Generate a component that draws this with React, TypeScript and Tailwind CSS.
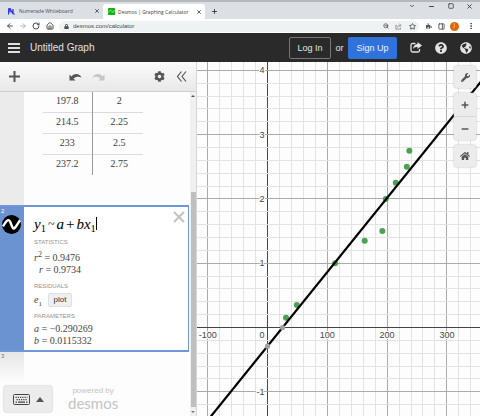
import type { ReactNode } from "react";
import {
  FaCog,
  FaGlobeAmericas,
  FaHome,
  FaMinus,
  FaPlus,
  FaPuzzlePiece,
  FaQuestionCircle,
  FaWrench,
  FaLock,
} from "react-icons/fa";
import {
  ArrowLeft,
  ArrowRight,
  ChevronDown,
  EllipsisVertical,
  House,
  Minus,
  PanelRight,
  Plus,
  RotateCw,
  Square,
  Star,
  X,
  ZoomOut,
} from "lucide-react";

const sans = "font-['Liberation_Sans',Arial,sans-serif]";
const serif = "font-['Liberation_Serif','Times_New_Roman',serif]";
const chrome = "font-['Open_Sans','Noto_Sans',sans-serif]";

function IconButton({ label, className = "", children }: { label: string; className?: string; children: ReactNode }) {
  return (
    <button type="button" aria-label={label} className={`flex shrink-0 items-center justify-center ${className}`}>
      {children}
    </button>
  );
}

function ShareIcon({ className = "" }: { className?: string }) {
  return (
    <svg viewBox="0 0 24 22" className={className} aria-hidden="true">
      <path d="M11 3H5Q2 3 2 6v11q0 3 3 3h11q3 0 3-3v-3" fill="none" stroke="currentColor" strokeWidth="2.6" />
      <path d="M15 0l9 7-9 7v-4q-6-1-9 4 1-9 9-10z" fill="currentColor" />
    </svg>
  );
}

function TabStrip() {
  return (
    <div className="flex h-[19px] items-end border-t-2 border-[#b5b8bd] bg-[#dce0e4]">
      <div className="flex h-4 w-[103px] shrink-0 items-center pr-[3px] pl-2">
        <svg viewBox="0 0 14 14" className="size-[7px] shrink-0" aria-hidden="true">
          <path d="M1 13V2l3-1v8M4 1l6 11V2" fill="none" stroke="#2b36d9" strokeWidth="2.6" />
          <circle cx="12" cy="12" r="1.6" fill="#2b36d9" />
        </svg>
        <button type="button" className="ml-1 flex-1 text-left text-[5px] leading-[8px] whitespace-nowrap text-[#4a4d52]">
          Numerade Whiteboard
        </button>
        <IconButton label="Close Numerade Whiteboard" className="size-[7px] text-[#333]">
          <X size={6} strokeWidth={3} />
        </IconButton>
      </div>
      <div className="flex h-[15px] w-[102px] shrink-0 items-center rounded-t-[3px] bg-white pr-[3px] pl-[5px]">
        <svg viewBox="0 0 14 14" className="size-[7px] shrink-0" aria-hidden="true">
          <rect width="14" height="14" rx="1" fill="#12b312" />
          <path d="M1 9c3-6 5-5 7-2s3 2 5-3" fill="none" stroke="#b8efb8" strokeWidth="1.6" />
        </svg>
        <button type="button" className="ml-[3px] flex-1 text-left text-[5px] leading-[8px] whitespace-nowrap text-[#3c4043]">
          Desmos | Graphing Calculator
        </button>
        <IconButton label="Close Desmos" className="size-[7px] text-[#333]">
          <X size={6} strokeWidth={3} />
        </IconButton>
      </div>
      <IconButton label="New tab" className="ml-[5px] h-4 w-2 text-[#333]">
        <Plus size={7} strokeWidth={3} />
      </IconButton>
      <div className="ml-auto flex self-start pr-[1px] text-[#333]">
        <IconButton label="Search tabs" className="h-2 w-[19px]"><ChevronDown size={6} strokeWidth={3} /></IconButton>
        <IconButton label="Minimize" className="h-2 w-5"><Minus size={7} strokeWidth={3} /></IconButton>
        <IconButton label="Maximize" className="h-2 w-[19px]"><Square size={6} strokeWidth={3} /></IconButton>
        <IconButton label="Close window" className="h-2 w-[19px]"><X size={7} strokeWidth={3} /></IconButton>
      </div>
    </div>
  );
}

function AddressBar() {
  return (
    <div className="flex h-[14px] items-center bg-white pr-1 pl-[3px] text-[#4a4d51]">
      <IconButton label="Back" className="w-[13px]"><ArrowLeft size={8} strokeWidth={3} /></IconButton>
      <IconButton label="Forward" className="w-[13px] text-[#b4b6b9]"><ArrowRight size={8} strokeWidth={3} /></IconButton>
      <IconButton label="Reload" className="w-[14px]"><RotateCw size={8} strokeWidth={3} /></IconButton>
      <IconButton label="Home" className="w-[13px]"><House size={8} strokeWidth={3} /></IconButton>
      <div className="ml-[3px] flex h-[11px] flex-1 items-center rounded-full bg-[#eff2f3] pl-[5px]">
        <FaLock size={5} />
        <input
          type="text"
          aria-label="Address"
          defaultValue="desmos.com/calculator"
          className={`ml-1 min-w-0 flex-1 bg-transparent text-[6px] leading-[8px] text-[#45484c] outline-none ${sans}`}
        />
        <IconButton label="Zoom" className="w-[13px]"><ZoomOut size={6} strokeWidth={3} /></IconButton>
        <IconButton label="Share page" className="w-[13px] text-[#777]">
          <svg viewBox="0 0 24 24" className="size-[7px]" fill="none" stroke="currentColor" strokeWidth="2.5" aria-hidden="true">
            <path d="M7 8H3v13h16v-5M8 16c1-6 5-8 9-8M15 3l6 5-6 5" />
          </svg>
        </IconButton>
        <IconButton label="Bookmark" className="w-[14px]"><Star size={7} strokeWidth={3} /></IconButton>
      </div>
      <IconButton label="Extensions" className="ml-[3px] w-[13px]"><FaPuzzlePiece size={6} /></IconButton>
      <IconButton label="Side panel" className="w-[13px]"><PanelRight size={7} strokeWidth={3} /></IconButton>
      <IconButton label="Profile" className="mx-[2px] size-[9px] rounded-full bg-[#e0640c] text-[5px] text-white">J</IconButton>
      <IconButton label="Menu" className="ml-1 w-[11px]"><EllipsisVertical size={8} strokeWidth={3} /></IconButton>
    </div>
  );
}

function Header() {
  return (
    <header className={`flex h-[29px] items-center bg-[#2a2a2a] pr-2 pl-2 text-[#e4e4e4] ${sans}`}>
      <IconButton label="Open graphs" className="w-3 flex-col gap-[2px]">
        <span className="h-[2px] w-3 bg-[#e0e0e0]" />
        <span className="h-[2px] w-3 bg-[#e0e0e0]" />
        <span className="h-[2px] w-3 bg-[#e0e0e0]" />
      </IconButton>
      <h1 className="ml-[10px] text-[10px] leading-[12px]">Untitled Graph</h1>
      <button type="button" className="ml-auto h-[22px] w-[42px] rounded-[2px] border border-[#777] text-[9px] leading-[12px]">
        Log In
      </button>
      <span className="w-[17px] text-center text-[9px] leading-[12px]">or</span>
      <button type="button" className="h-[22px] w-[49px] rounded-[2px] bg-[#2f72dc] text-[9px] leading-[12px] text-[#eaf2ff]">
        Sign Up
      </button>
      <IconButton label="Share graph" className="ml-[13px] w-3"><ShareIcon className="h-[11px] w-3" /></IconButton>
      <IconButton label="Help" className="ml-[13px] w-3"><FaQuestionCircle size={12} /></IconButton>
      <IconButton label="Language" className="ml-[13px] w-3"><FaGlobeAmericas size={12} /></IconButton>
    </header>
  );
}

function BentArrow() {
  return (
    <svg viewBox="0 0 26 16" className="h-2 w-[13px]" aria-hidden="true">
      <path d="M1 3v12h12l-4-4c5-4 10-5 16-2C22 2 12-1 5 7z" fill="currentColor" />
    </svg>
  );
}

function PanelToolbar() {
  return (
    <div className="flex h-[30px] shrink-0 items-center border-b border-[#d0d0d0] bg-linear-to-b from-[#fbfbfb] to-[#e8e8e8] pl-2 text-[#555]">
      <IconButton label="Add item" className="w-3">
        <svg viewBox="0 0 22 22" className="size-[11px]" stroke="currentColor" strokeWidth="4" aria-hidden="true">
          <path d="M11 0v22M0 11h22" />
        </svg>
      </IconButton>
      <IconButton label="Undo" className="ml-12 w-[14px]"><BentArrow /></IconButton>
      <IconButton label="Redo" className="ml-[10px] w-[14px] -scale-x-100 text-[#c6c6c6]"><BentArrow /></IconButton>
      <IconButton label="Edit list" className="ml-auto w-3"><FaCog size={11} /></IconButton>
      <IconButton label="Hide list" className="mr-[9px] ml-[10px] w-3">
        <svg viewBox="0 0 22 22" className="size-[11px]" fill="none" stroke="currentColor" strokeWidth="2.4" aria-hidden="true">
          <path d="M11 1L3 11l8 10M20 1l-8 10 8 10" />
        </svg>
      </IconButton>
    </div>
  );
}

const rows = [
  ["197.8", "2"],
  ["214.5", "2.25"],
  ["233", "2.5"],
  ["237.2", "2.75"],
];

function DataTable() {
  return (
    <div className="flex h-[113px]">
      <div className="w-6 shrink-0 bg-[#ebebeb]" />
      <div className="flex-1 pl-[19px]">
        <table aria-label="Data points" className={`w-[100px] table-fixed border-collapse text-center text-[10px] leading-[12px] text-[#3c3c3c] ${serif}`}>
          <tbody>
            {rows.map(([x, y], i) => (
              <tr key={x} className={i === 0 ? "h-5 border-b border-[#dcdcdc]" : i < rows.length - 1 ? "h-[21px] border-b border-[#dcdcdc]" : "h-[21px]"}>
                <td className="w-[49px] border-r border-[#999] pb-[2px]">{x}</td>
                <td className="pb-[2px] pl-[3px]">{y}</td>
              </tr>
            ))}
          </tbody>
        </table>
      </div>
    </div>
  );
}

function SectionLabel({ children }: { children: ReactNode }) {
  return <h2 className={`text-[6px] leading-[8px] text-[#929292] ${sans}`}>{children}</h2>;
}

function Sub({ children }: { children: ReactNode }) {
  return <sub className="bottom-[-3px] text-[0.7em] not-italic">{children}</sub>;
}

function Regression() {
  return (
    <div className="mr-px flex h-[147px] border-y-2 border-r border-[#6f96d8] bg-white">
      <div className="w-6 shrink-0 bg-[#6b93d2]">
        <div className={`pl-[1px] text-[6px] leading-[8px] text-white ${sans}`}>2</div>
        <button type="button" aria-label="Hide regression" className="ml-[2px] block">
          <svg viewBox="0 0 40 40" className="size-[19px]" aria-hidden="true">
            <circle cx="20" cy="20" r="20" fill="#000" />
            <path d="M2 24C8 14 13 6 17 14s5 18 10 13 7-11 11-16" fill="none" stroke="#fff" strokeWidth="5" />
          </svg>
        </button>
      </div>
      <div className={`flex-1 pl-[10px] text-[10px] leading-[12px] text-[#444] ${serif}`}>
        <div className="flex items-start justify-between pt-1 pr-[3px]">
          <div role="textbox" aria-label="Expression 2" tabIndex={0} className="flex h-[25px] items-center text-[15px] leading-[20px] text-black italic outline-none">
            <span>y<Sub>1</Sub></span>
            <span className="mx-[2px] text-[12px] not-italic">~</span>
            <span>a</span>
            <span className="mx-[2px] not-italic">+</span>
            <span>bx<Sub>1</Sub></span>
            <span className="h-[13px] w-px bg-black" />
          </div>
          <IconButton label="Delete expression" className="w-3 text-[#c2c2c2]">
            <svg viewBox="0 0 12 12" className="size-3" stroke="currentColor" strokeWidth="2" aria-hidden="true">
              <path d="M1 1l10 10M11 1L1 11" />
            </svg>
          </IconButton>
        </div>
        <div className="mt-[2px]"><SectionLabel>STATISTICS</SectionLabel></div>
        <div className="mt-[6px] h-3"><i>r</i><sup className="text-[8px]">2</sup> = 0.9476</div>
        <div className="h-3 pl-[5px]"><i>r</i> = 0.9734</div>
        <div className="mt-[6px]"><SectionLabel>RESIDUALS</SectionLabel></div>
        <div className="flex h-5 items-center gap-[6px]">
          <span><i>e</i><Sub>1</Sub></span>
          <button type="button" className={`h-[14px] w-6 rounded-[2px] border border-[#e0e0e0] bg-[#f0f0f0] text-[8px] leading-[10px] text-[#333] ${sans}`}>
            plot
          </button>
        </div>
        <div className="mt-[2px]"><SectionLabel>PARAMETERS</SectionLabel></div>
        <div className="mt-[3px]"><i>a</i> = −0.290269</div>
        <div><i>b</i> = 0.0115332</div>
      </div>
    </div>
  );
}

function KeyboardIcon() {
  return (
    <svg viewBox="0 0 34 22" className="h-[11px] w-[17px]" fill="none" stroke="#444" aria-hidden="true">
      <rect x="1" y="1" width="32" height="20" rx="2" strokeWidth="2" />
      <path d="M5 6.500h24M7 11h22" strokeWidth="2.500" strokeDasharray="2.500 2" />
      <path d="M5 16h3M10 16h14M26 16h3" strokeWidth="2.500" />
    </svg>
  );
}

function ExpressionPanel() {
  return (
    <aside className="flex w-[197px] shrink-0 flex-col border-r border-[#d6d6d6] bg-[#fdfdfd]">
      <PanelToolbar />
      <div className="flex flex-1">
        <div className="flex min-w-0 flex-1 flex-col">
          <DataTable />
          <Regression />
          <div className={`h-[30px] w-6 bg-linear-to-b from-[#e6e6e6] to-[#fdfdfd] pl-[1px] text-[6px] leading-[8px] text-[#777] ${sans}`}>3</div>
          <div className="mt-auto flex items-center gap-4 pb-1 pl-1">
            <button type="button" aria-label="Open keypad" className="flex h-[26px] w-12 items-center justify-center gap-[6px] rounded-[3px] bg-[#ececec] shadow-[0_0_2px_#aaa]">
              <KeyboardIcon />
              <svg viewBox="0 0 8 5" className="h-[5px] w-2" aria-hidden="true"><path d="M0 5l4-5 4 5z" fill="#555" /></svg>
            </button>
            <div className="text-center text-[#c4c4c4]">
              <div className={`text-[8px] leading-[9px] ${sans}`}>powered by</div>
              <div className="font-['Lato','Open_Sans',sans-serif] text-[15px] leading-[17px]">desmos</div>
            </div>
          </div>
        </div>
        <div className="flex w-[6px] shrink-0 flex-col items-center bg-[#f0f0f0] py-[3px]" aria-hidden="true">
          <svg viewBox="0 0 4 2" className="h-[2px] w-1"><path d="M0 2l2-2 2 2z" fill="#555" /></svg>
          <div className="mt-[95px] w-[5px] flex-1 bg-[#bfbfbf]" />
          <svg viewBox="0 0 4 2" className="mt-1 h-[2px] w-1"><path d="M0 0l2 2 2-2z" fill="#777" /></svg>
        </div>
      </div>
    </aside>
  );
}

// Plot coordinates: origin and pixels per unit on each axis.
const X0 = 70.5;
const Y0 = 265.5;
const DX = 0.598;
const DY = 64.3;
const px = (x: number) => X0 + x * DX;
const py = (y: number) => Y0 - y * DY;

const points = [
  [31, 0.15], [49, 0.35], [113, 1], [162.5, 1.35], [192, 1.5],
  [197.8, 2], [214.5, 2.25], [233, 2.5], [237.2, 2.75],
];
const gridX = Array.from({ length: 120 }, (_, i) => (i - 6) * 20);
const gridY = Array.from({ length: 80 }, (_, i) => (i - 50) / 5);

function Graph() {
  return (
    <svg role="img" aria-label="Scatter plot with a line of best fit" className={`absolute inset-0 size-full ${sans}`}>
      {gridX.map((x) => (
        <line key={x} x1={Math.floor(px(x)) + 0.5} x2={Math.floor(px(x)) + 0.5} y1="0" y2="100%" stroke={x === 0 ? "#444" : x % 100 === 0 ? "#aaa" : "#e3e3e3"} />
      ))}
      {gridY.map((y) => (
        <line key={y} x1="0" x2="100%" y1={Math.floor(py(y)) + 0.5} y2={Math.floor(py(y)) + 0.5} stroke={y === 0 ? "#444" : Number.isInteger(y) ? "#aaa" : "#e3e3e3"} />
      ))}
      <g fontSize="9" fill="#444" stroke="#fff" strokeWidth="2" paintOrder="stroke">
        {[4, 3, 2, 1, -1].map((y) => (
          <text key={y} x={X0 - 3} y={py(y) + 3} textAnchor="end">{y}</text>
        ))}
        {[-100, 100, 200, 300].map((x) => (
          <text key={x} x={px(x)} y={Y0 + 10} textAnchor="middle">{x}</text>
        ))}
        <text x={X0 - 3} y={Y0 + 10} textAnchor="end">0</text>
      </g>
      {points.map(([x, y]) => (
        <circle key={x} cx={px(x)} cy={py(y)} r="3" fill="#4ca052" />
      ))}
      <line x1={px(-115)} y1={py(-0.290269 - 115 * 0.0115332)} x2={px(2000)} y2={py(-0.290269 + 2000 * 0.0115332)} stroke="#000" strokeWidth="2.2" />
      <circle cx={px(0)} cy={py(-0.29)} r="2.6" fill="#a0a0a0" />
      <circle cx={px(25.2)} cy={py(0)} r="2.6" fill="#a0a0a0" />
    </svg>
  );
}

function GraphControls() {
  return (
    <div className="absolute top-1 right-1 flex w-[22px] flex-col gap-[5px] text-[#555]">
      <IconButton label="Graph settings" className="h-[22px] rounded-[3px] bg-[#ececec] shadow-[0_0_2px_#aaa]"><FaWrench size={9} /></IconButton>
      <div className="flex flex-col divide-y divide-[#d8d8d8] rounded-[3px] bg-[#ececec] shadow-[0_0_2px_#aaa]">
        <IconButton label="Zoom in" className="h-6"><FaPlus size={8} /></IconButton>
        <IconButton label="Zoom out" className="h-[23px]"><FaMinus size={8} /></IconButton>
      </div>
      <IconButton label="Default viewport" className="h-[22px] rounded-[3px] bg-[#ececec] shadow-[0_0_2px_#aaa]"><FaHome size={10} /></IconButton>
    </div>
  );
}

export default function App() {
  return (
    <div className={`flex min-h-screen flex-col bg-white ${chrome}`}>
      <TabStrip />
      <AddressBar />
      <Header />
      <div className="flex flex-1">
        <ExpressionPanel />
        <main className="relative min-w-0 flex-1 overflow-hidden bg-[#fdfdfd]">
          <Graph />
          <GraphControls />
        </main>
      </div>
    </div>
  );
}
